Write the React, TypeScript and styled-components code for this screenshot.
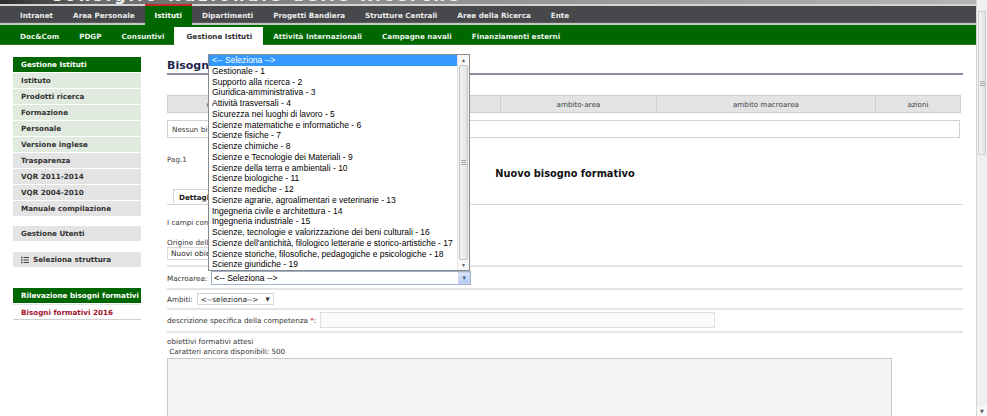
import React from "react";
import styled, { createGlobalStyle, css } from "styled-components";
import { FaList } from "react-icons/fa";

const GlobalStyle = createGlobalStyle`
  html, body { margin: 0; padding: 0; background: #fff; }
  body {
    font-family: "DejaVu Sans", Verdana, sans-serif;
    font-size: 7.2px;
    color: #333;
    overflow: hidden;
  }
  #root { width: 987px; height: 416px; }
  * { box-sizing: border-box; }
`;

const Screen = styled.div`
  position: relative;
  display: flex;
  width: 987px;
  height: 416px;
  overflow: hidden;
  background: #fff;
`;

const Page = styled.div`
  flex: 1;
  min-width: 0;
  display: block;
`;

/* ---------- header ---------- */
const Banner = styled.div`
  height: 4px;
  overflow: hidden;
  padding-left: 50px;
  background: linear-gradient(90deg, #2c2c2c 0%, #6a6a6a 10%, #8a8a8a 35%, #9c9c9c 65%, #b4b4b4 100%);
`;

const BannerTitle = styled.div`
  margin-top: -12px;
  font-weight: bold;
  font-size: 16px;
  line-height: 16px;
  letter-spacing: 3px;
  color: #f2f2f2;
  white-space: nowrap;
`;

const TopNav = styled.nav`
  display: flex;
  height: 19px;
  padding-left: 10px;
  background: #46484b;
  border-top: 2px solid #d4d4d4;
  border-bottom: 1px solid #6a5468;
`;

const TopLink = styled.span<{ $active?: boolean }>`
  position: relative;
  display: flex;
  align-items: center;
  padding: 2px 10px 0;
  color: #ececec;
  font-weight: bold;
  white-space: nowrap;
  ${(p) =>
    p.$active &&
    css`
      margin: -2px 0 -3px;
      padding-bottom: 3px;
      border-top: 2px solid #c42a2a;
      background: #006600;
      color: #fff;
    `}
`;

const SubNav = styled.nav`
  display: flex;
  height: 22px;
  padding-left: 10px;
  background: #006600;
  border-top: 2px solid #b9cfb9;
  border-bottom: 1px solid #2d7a2d;
`;

const SubLink = styled.span<{ $active?: boolean }>`
  position: relative;
  display: flex;
  align-items: center;
  padding: 3px 10px 0;
  color: #e8f2e8;
  font-weight: bold;
  white-space: nowrap;
  ${(p) =>
    p.$active &&
    css`
      margin: 2px 0 -1px;
      padding: 1px 11px 0 12px;
      background: #fff;
      color: #333;
    `}
`;

/* ---------- body ---------- */
const Body = styled.div`
  display: flex;
  align-items: flex-start;
  gap: 26px;
  padding: 12px 0 0 13px;
`;

const Sidebar = styled.aside`
  width: 128px;
  flex-shrink: 0;
  display: flex;
  flex-direction: column;
`;

const SideGroup = styled.ul<{ $gap: number }>`
  display: flex;
  flex-direction: column;
  gap: 1px;
  margin: ${(p) => p.$gap}px 0 0;
  padding: 0;
  list-style: none;
`;

const SideHead = styled.li`
  height: 15px;
  flex-shrink: 0;
  display: flex;
  align-items: center;
  padding-left: 8px;
  background: #006600;
  color: #fff;
  font-weight: bold;
`;

const SideItem = styled.li<{ $tone?: "green" | "gray" | "white" }>`
  height: 15px;
  flex-shrink: 0;
  display: flex;
  align-items: center;
  gap: 4px;
  padding-left: 8px;
  font-weight: bold;
  color: #333;
  background: ${(p) => (p.$tone === "green" ? "#e1eadf" : p.$tone === "white" ? "#fff" : "#e4e4e4")};
  ${(p) =>
    p.$tone === "white" &&
    css`
      color: #a3142c;
      border-top: 1px solid #e6e6e6;
      border-bottom: 1px solid #cfcfcf;
      height: 16px;
    `}
  svg {
    font-size: 8px;
    color: #444;
  }
`;

const Main = styled.main`
  width: 796px;
  flex-shrink: 0;
  display: flex;
  flex-direction: column;
`;

const Title = styled.h1`
  margin: 2px 0 0;
  font-size: 11px;
  line-height: 14px;
  font-weight: bold;
  color: #1f2550;
  border-bottom: 2px solid #8a8aa6;
  white-space: nowrap;
`;

const Grid = styled.table`
  margin-top: 20px;
  width: 793px;
  border-collapse: collapse;
  table-layout: fixed;
`;

const Th = styled.th`
  height: 17px;
  padding: 0;
  background: #e3e3e3;
  border: 1px solid #cdcdcd;
  font-weight: normal;
  color: #444;
  font-size: 7.2px;
`;

const EmptyRow = styled.div`
  margin-top: 7px;
  width: 793px;
  height: 18px;
  display: flex;
  align-items: center;
  padding-left: 4px;
  border: 1px solid #d2d2d2;
  color: #333;
`;

const Pager = styled.div`
  margin-top: 17px;
  line-height: 10px;
  color: #444;
`;

const SectionTitle = styled.h2`
  margin: 3px 0 0;
  text-align: center;
  font-size: 9.8px;
  line-height: 12px;
  font-weight: bold;
  color: #111;
`;

const TabStrip = styled.div`
  margin-top: 9px;
  display: flex;
  padding-left: 6px;
  border-bottom: 1px solid #d6d6d6;
`;

const Tab = styled.div`
  height: 15px;
  display: flex;
  align-items: center;
  padding: 0 5px;
  border: 1px solid #d6d6d6;
  border-bottom: none;
  background: #fff;
  font-weight: bold;
  color: #222;
`;

const Note = styled.p`
  margin: 13px 0 0;
  line-height: 10px;
  color: #333;
`;

const FieldRow = styled.div<{ $pt: number; $pb: number; $column?: boolean }>`
  display: flex;
  flex-direction: ${(p) => (p.$column ? "column" : "row")};
  align-items: ${(p) => (p.$column ? "flex-start" : "center")};
  gap: ${(p) => (p.$column ? 0 : 4)}px;
  padding: ${(p) => p.$pt}px 0 ${(p) => p.$pb}px;
  border-bottom: 2px solid #e4e4e4;
`;

const Label = styled.span`
  line-height: 9px;
  color: #333;
  white-space: nowrap;
`;

const Req = styled.span`
  color: #d0103a;
`;

const PlainSelect = styled.div<{ $w: number; $h: number }>`
  width: ${(p) => p.$w}px;
  height: ${(p) => p.$h}px;
  display: flex;
  align-items: center;
  justify-content: space-between;
  padding: 0 3px;
  border: 1px solid #d8d8d8;
  background: #fff;
  color: #222;
  font-size: 7.4px;
  white-space: nowrap;
  overflow: hidden;
`;

const Caret = styled.span`
  font-size: 5.5px;
  color: #333;
`;

const XpSelect = styled.div`
  width: 260px;
  height: 14px;
  display: flex;
  align-items: center;
  border: 1px solid #9fb2c7;
  background: #fff;
  font-family: "Liberation Sans", Arial, sans-serif;
  font-size: 8.5px;
  color: #000;
`;

const XpValue = styled.span`
  flex: 1;
  padding-left: 2px;
`;

const XpButton = styled.span`
  width: 12px;
  height: 12px;
  display: flex;
  align-items: center;
  justify-content: center;
  background: linear-gradient(180deg, #dce8fc, #b3c9f2);
  border: 1px solid #c4d3f0;
  color: #4d6185;
  font-size: 6px;
`;

const TextInput = styled.div`
  width: 395px;
  height: 16px;
  border: 1px solid #e0e0e0;
  background: #fbfbfb;
`;

const Caption = styled.div<{ $mt: number }>`
  margin-top: ${(p) => p.$mt}px;
  line-height: 10px;
  color: #333;
`;

const TextArea = styled.div`
  margin-top: 1px;
  width: 725px;
  height: 90px;
  border: 1px solid #c8c8c8;
  border-bottom: none;
  background: #f4f4f4;
`;

/* ---------- open select list (overlay) ---------- */
const ListPopup = styled.div`
  position: absolute;
  left: 208px;
  top: 54px;
  width: 262px;
  height: 217px;
  display: flex;
  background: #fff;
  border: 1px solid #8a8a8a;
  font-family: "Liberation Sans", Arial, sans-serif;
  font-size: 8.5px;
  color: #000;
  z-index: 5;
`;

const Options = styled.ul`
  flex: 1;
  margin: 0;
  padding: 0;
  list-style: none;
  overflow: hidden;
`;

const Option = styled.li<{ $selected?: boolean }>`
  height: 10.75px;
  line-height: 10.75px;
  padding-left: 3px;
  white-space: nowrap;
  ${(p) =>
    p.$selected &&
    css`
      background: #3399ff;
      color: #fff;
    `}
`;

const ListScroll = styled.div`
  width: 12px;
  display: flex;
  flex-direction: column;
  background: #f4f4f4;
  border-left: 1px solid #e2e2e2;
`;

const ScrollArrow = styled.div`
  height: 10px;
  flex-shrink: 0;
  display: flex;
  align-items: center;
  justify-content: center;
  font-size: 5px;
  color: #555;
  background: #f8f8f8;
`;

const ScrollThumb = styled.div`
  flex: 1;
  margin: 0 1px;
  display: flex;
  align-items: center;
  justify-content: center;
  border: 1px solid #c6c6c6;
  border-radius: 2px;
  background: linear-gradient(90deg, #f2f2f2, #e4e4e4);
`;

const Grip = styled.div`
  width: 5px;
  height: 5px;
  background: repeating-linear-gradient(180deg, #a8a8a8 0 1px, transparent 1px 2px);
`;

/* ---------- page scrollbar ---------- */
const PageScrollbar = styled.div`
  width: 11px;
  flex-shrink: 0;
  display: flex;
  flex-direction: column;
  background: #efefef;
  border-left: 1px solid #d6d6d6;
`;

const PageThumb = styled.div`
  height: 144px;
  flex-shrink: 0;
  margin: 11px 1px 0;
  display: flex;
  align-items: center;
  justify-content: center;
  border: 1px solid #cfcfcf;
  background: linear-gradient(90deg, #f4f4f4, #e2e2e2);
`;

const PageTrack = styled.div`
  flex: 1;
`;

const topLinks = [
  "Intranet",
  "Area Personale",
  "Istituti",
  "Dipartimenti",
  "Progetti Bandiera",
  "Strutture Centrali",
  "Aree della Ricerca",
  "Ente",
];

const subLinks = [
  "Doc&Com",
  "PDGP",
  "Consuntivi",
  "Gestione Istituti",
  "Attività Internazionali",
  "Campagne navali",
  "Finanziamenti esterni",
];

const sideItems: { label: string; tone: "green" | "gray" }[] = [
  { label: "Istituto", tone: "green" },
  { label: "Prodotti ricerca", tone: "green" },
  { label: "Formazione", tone: "green" },
  { label: "Personale", tone: "green" },
  { label: "Versione inglese", tone: "green" },
  { label: "Trasparenza", tone: "gray" },
  { label: "VQR 2011-2014", tone: "gray" },
  { label: "VQR 2004-2010", tone: "gray" },
  { label: "Manuale compilazione", tone: "gray" },
];

const areas = [
  "<-- Seleziona -->",
  "Gestionale - 1",
  "Supporto alla ricerca - 2",
  "Giuridica-amministrativa - 3",
  "Attività trasversali - 4",
  "Sicurezza nei luoghi di lavoro - 5",
  "Scienze matematiche e informatiche - 6",
  "Scienze fisiche - 7",
  "Scienze chimiche - 8",
  "Scienze e Tecnologie dei Materiali - 9",
  "Scienze della terra e ambientali - 10",
  "Scienze biologiche - 11",
  "Scienze mediche - 12",
  "Scienze agrarie, agroalimentari e veterinarie - 13",
  "Ingegneria civile e architettura - 14",
  "Ingegneria industriale - 15",
  "Scienze, tecnologie e valorizzazione dei beni culturali - 16",
  "Scienze dell'antichità, filologico letterarie e storico-artistiche - 17",
  "Scienze storiche, filosofiche, pedagogiche e psicologiche - 18",
  "Scienze giuridiche - 19",
  "Scienze economiche e statistiche - 20",
];

export default function App() {
  return (
    <>
      <GlobalStyle />
      <Screen>
        <Page>
          <Banner>
            <BannerTitle>Consiglio Nazionale delle Ricerche</BannerTitle>
          </Banner>
          <TopNav>
            {topLinks.map((l) => (
              <TopLink key={l} $active={l === "Istituti"}>
                {l}
              </TopLink>
            ))}
          </TopNav>
          <SubNav>
            {subLinks.map((l) => (
              <SubLink key={l} $active={l === "Gestione Istituti"}>
                {l}
              </SubLink>
            ))}
          </SubNav>

          <Body>
            <Sidebar>
              <SideGroup $gap={0}>
                <SideHead>Gestione Istituti</SideHead>
                {sideItems.map((s) => (
                  <SideItem key={s.label} $tone={s.tone}>
                    {s.label}
                  </SideItem>
                ))}
              </SideGroup>
              <SideGroup $gap={10}>
                <SideItem $tone="gray">Gestione Utenti</SideItem>
              </SideGroup>
              <SideGroup $gap={11}>
                <SideItem $tone="gray">
                  <FaList />
                  Seleziona struttura
                </SideItem>
              </SideGroup>
              <SideGroup $gap={21}>
                <SideHead>Rilevazione bisogni formativi</SideHead>
                <SideItem $tone="white">Bisogni formativi 2016</SideItem>
              </SideGroup>
            </Sidebar>

            <Main>
              <Title>Bisogni formativi</Title>
              <Grid>
                <thead>
                  <tr>
                    <Th style={{ width: 103 }}>origine</Th>
                    <Th style={{ width: 230 }}>descrizione</Th>
                    <Th style={{ width: 156 }}>ambito-area</Th>
                    <Th style={{ width: 219 }}>ambito macroarea</Th>
                    <Th style={{ width: 85 }}>azioni</Th>
                  </tr>
                </thead>
              </Grid>
              <EmptyRow>Nessun bisogno inserito</EmptyRow>
              <Pager>Pag.1</Pager>
              <SectionTitle>Nuovo bisogno formativo</SectionTitle>
              <TabStrip>
                <Tab>Dettagli bisogno</Tab>
              </TabStrip>
              <Note>I campi contrassegnati sono obbligatori</Note>

              <FieldRow $column $pt={10} $pb={5}>
                <Label>Origine dell'esigenza</Label>
                <PlainSelect $w={250} $h={13}>
                  <span>Nuovi obiettivi</span>
                  <Caret>▼</Caret>
                </PlainSelect>
              </FieldRow>
              <FieldRow $pt={4} $pb={3}>
                <Label>Macroarea:</Label>
                <XpSelect>
                  <XpValue>&lt;-- Seleziona --&gt;</XpValue>
                  <XpButton>▼</XpButton>
                </XpSelect>
              </FieldRow>
              <FieldRow $pt={3} $pb={3}>
                <Label>Ambiti:</Label>
                <PlainSelect $w={77} $h={12}>
                  <span>&lt;--seleziona--&gt;</span>
                  <Caret>▼</Caret>
                </PlainSelect>
              </FieldRow>
              <FieldRow $pt={2} $pb={3}>
                <Label>
                  descrizione specifica della competenza <Req>*</Req>:
                </Label>
                <TextInput />
              </FieldRow>
              <Caption $mt={4}>obiettivi formativi attesi</Caption>
              <Caption $mt={0}>&nbsp;Caratteri ancora disponibili: 500</Caption>
              <TextArea />
            </Main>
          </Body>
        </Page>

        <PageScrollbar>
          <PageThumb>
            <Grip />
          </PageThumb>
          <PageTrack />
          <ScrollArrow>▼</ScrollArrow>
        </PageScrollbar>

        <ListPopup>
          <Options>
            {areas.map((a, i) => (
              <Option key={a} $selected={i === 0}>
                {a}
              </Option>
            ))}
          </Options>
          <ListScroll>
            <ScrollArrow>▲</ScrollArrow>
            <ScrollThumb>
              <Grip />
            </ScrollThumb>
            <ScrollArrow>▼</ScrollArrow>
          </ListScroll>
        </ListPopup>
      </Screen>
    </>
  );
}
